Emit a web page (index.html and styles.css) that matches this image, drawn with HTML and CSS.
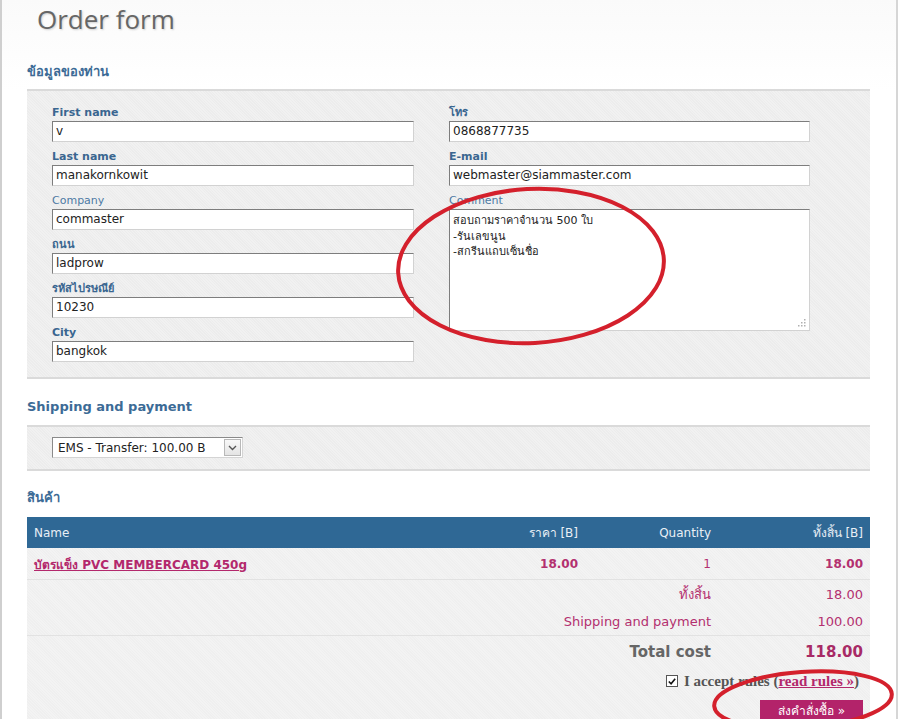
FILE: index.html
```html
<!DOCTYPE html>
<html lang="th">
<head>
<meta charset="utf-8">
<title>Order form</title>
<link rel="stylesheet" href="styles.css">
</head>
<body>
<div class="page">
  <h1 class="title">Order form</h1>

  <h2 class="sec sec-first">ข้อมูลของท่าน</h2>
  <div class="panel form-panel">
    <div class="col">
      <div class="field"><label class="lbl req">First name</label><div class="inp">v</div></div>
      <div class="field"><label class="lbl req">Last name</label><div class="inp">manakornkowit</div></div>
      <div class="field"><label class="lbl">Company</label><div class="inp">commaster</div></div>
      <div class="field"><label class="lbl req">ถนน</label><div class="inp">ladprow</div></div>
      <div class="field"><label class="lbl req">รหัสไปรษณีย์</label><div class="inp">10230</div></div>
      <div class="field"><label class="lbl req">City</label><div class="inp">bangkok</div></div>
    </div>
    <div class="col">
      <div class="field"><label class="lbl req">โทร</label><div class="inp">0868877735</div></div>
      <div class="field"><label class="lbl req">E-mail</label><div class="inp">webmaster@siammaster.com</div></div>
      <div class="field"><label class="lbl">Comment</label>
        <div class="inp area">สอบถามราคาจำนวน 500 ใบ<br>-รันเลขนูน<br>-สกรีนแถบเซ็นชื่อ
          <svg class="grip" width="9" height="9" viewBox="0 0 9 9"><g fill="#b0b0b0"><rect x="7" y="1" width="1.5" height="1.5"/><rect x="4" y="4" width="1.5" height="1.5"/><rect x="7" y="4" width="1.5" height="1.5"/><rect x="1" y="7" width="1.5" height="1.5"/><rect x="4" y="7" width="1.5" height="1.5"/><rect x="7" y="7" width="1.5" height="1.5"/></g></svg>
        </div>
      </div>
    </div>
  </div>

  <h2 class="sec sec-ship">Shipping and payment</h2>
  <div class="panel ship-panel">
    <div class="select"><span class="sel-text">EMS - Transfer: 100.00 B</span><span class="sel-btn"><svg width="9" height="6" viewBox="0 0 9 6"><path d="M1 1 L4.5 4.5 L8 1" fill="none" stroke="#555" stroke-width="1.4"/></svg></span></div>
  </div>

  <h2 class="sec sec-items">สินค้า</h2>
  <div class="items-wrap">
    <table class="items">
      <colgroup><col class="c-name"><col class="c-price"><col class="c-qty"><col class="c-sum"></colgroup>
      <thead>
        <tr><th class="tl">Name</th><th>ราคา [B]</th><th>Quantity</th><th>ทั้งสิ้น [B]</th></tr>
      </thead>
      <tbody>
        <tr class="r-item"><td class="tl"><a class="plink">บัตรแข็ง PVC MEMBERCARD 450g</a></td><td class="b">18.00</td><td>1</td><td class="b">18.00</td></tr>
        <tr class="r-sub"><td></td><td></td><td>ทั้งสิ้น</td><td>18.00</td></tr>
        <tr class="r-ship"><td></td><td colspan="2">Shipping and payment</td><td>100.00</td></tr>
        <tr class="r-total"><td></td><td colspan="2" class="tc-label">Total cost</td><td class="tc-val">118.00</td></tr>
      </tbody>
    </table>
    <div class="foot">
      <div class="accept"><span class="cb"><svg width="11" height="11" viewBox="0 0 11 11"><path d="M2 5.5 L4.5 8 L9 2.5" fill="none" stroke="#111" stroke-width="1.8"/></svg></span><span class="acc-text">I accept rules (<a class="rlink">read rules »</a>)</span></div>
      <div class="btn-row"><span class="btn">ส่งคำสั่งซื้อ »</span></div>
    </div>
  </div>

  <svg class="marks" width="900" height="719" viewBox="0 0 900 719">
    <ellipse cx="531" cy="266" rx="133" ry="77" transform="rotate(-3 531 266)" fill="none" stroke="#d4202c" stroke-width="4"/>
    <ellipse cx="803" cy="700" rx="89" ry="28" transform="rotate(-4 803 700)" fill="none" stroke="#d4202c" stroke-width="4"/>
  </svg>
</div>
</body>
</html>
```

FILE: styles.css
```css
* { box-sizing: border-box; }
html, body { margin: 0; padding: 0; background: #fff; }
body {
  font-family: "DejaVu Sans", Tahoma, "Noto Sans", sans-serif;
  font-size: 12px;
  color: #222;
  overflow: hidden;
}
.page {
  position: relative;
  width: 898px;
  height: 719px;
  border-left: 2px solid #cfcfcf;
  border-right: 2px solid #d6d6d6;
  padding: 0 26px 0 25px;
  background: linear-gradient(#fafafa, #fff 90px);
}
.title {
  margin: 0;
  padding: 3px 0 0 10px;
  height: 34px;
  line-height: 32px;
  font-family: "Open Sans", "DejaVu Sans", sans-serif;
  font-weight: 400;
  font-size: 26px;
  color: #666;
  text-shadow: 1px 1px 2px rgba(0,0,0,0.18);
}
.sec {
  margin: 0;
  font-size: 13px;
  font-weight: bold;
  line-height: 16px;
  color: #3c6b96;
}
.sec-first { padding: 30px 0 9px; }
.sec-ship { padding: 20px 0 10px; }
.sec-items { padding: 19px 0 11px; }

.panel {
  border-top: 2px solid #dadada;
  border-bottom: 2px solid #dadada;
  background-color: #f1f1f1;
  background-image: repeating-linear-gradient(45deg, rgba(0,0,0,0.018) 0 1px, transparent 1px 2px);
}
.form-panel {
  display: flex;
  gap: 35px;
  padding: 7px 0 15px 25px;
}
.col { width: 362px; }
.col + .col { width: 361px; }
.field { padding-top: 6px; }
.lbl {
  display: block;
  height: 16px;
  line-height: 17px;
  margin-bottom: 1px;
  font-size: 11px;
  color: #4d7aa4;
}
.lbl.req { font-weight: bold; color: #3a6690; }
.inp {
  position: relative;
  height: 21px;
  line-height: 19px;
  padding: 0 3px;
  background: #fff;
  border: 1px solid;
  border-color: #7d7d7d #d2d2d2 #d2d2d2 #7d7d7d;
  font-size: 12px;
  color: #222;
  white-space: nowrap;
}
.inp.area {
  height: 122px;
  line-height: 15.5px;
  padding-top: 3px;
  font-size: 11px;
}
.grip { position: absolute; right: 3px; bottom: 3px; }

.ship-panel { padding: 10px 0 11px 25px; }
.select {
  display: flex;
  align-items: center;
  width: 191px;
  height: 21px;
  background: #fff;
  border: 1px solid;
  border-color: #8a8a8a #d4d4d4 #d4d4d4 #8a8a8a;
  font-size: 12px;
  color: #222;
}
.sel-text { flex: 1; padding-left: 5px; white-space: nowrap; }
.sel-btn {
  width: 17px;
  height: 17px;
  margin-right: 1px;
  display: flex;
  align-items: center;
  justify-content: center;
  border: 1px solid #b8b8b8;
  background: linear-gradient(#f8f8f8, #e4e4e4);
}

.items-wrap {
  height: 202px;
  background-color: #f3f3f3;
  background-image: repeating-linear-gradient(45deg, rgba(0,0,0,0.016) 0 1px, transparent 1px 2px);
}
.items {
  width: 843px;
  table-layout: fixed;
  border-collapse: collapse;
  font-size: 13px;
}
.c-name { width: 430px; }
.c-price { width: 128px; }
.c-qty { width: 133px; }
.c-sum { width: 152px; }
.items th {
  height: 31px;
  padding: 0 7px;
  background: #2f6895;
  color: #e9eff5;
  font-weight: normal;
  font-size: 12px;
  text-align: right;
  white-space: nowrap;
}
.items th.tl, .items td.tl { text-align: left; }
.items td {
  padding: 0 7px;
  text-align: right;
  color: #b3306f;
  white-space: nowrap;
}
.r-item td { height: 31px; padding-top: 2px; border-bottom: 1px solid #e2e2e2; font-size: 12px; }
.r-sub td { height: 28px; padding-top: 2px; }
.r-ship td { height: 28px; padding-top: 2px; border-bottom: 1px solid #e2e2e2; }
.r-total td { height: 32px; padding-top: 2px; }
.items td.b { font-weight: bold; }
.plink { color: #b3286c; font-weight: bold; text-decoration: underline; }
.tc-label { font-weight: bold; font-size: 15px; color: #666 !important; }
.tc-val { font-weight: bold; font-size: 15px; color: #a82a66 !important; }

.foot { padding: 6px 7px 0 0; }
.accept {
  display: flex;
  justify-content: flex-end;
  align-items: center;
  gap: 6px;
  height: 16px;
  padding-right: 4px;
}
.cb {
  width: 12px;
  height: 12px;
  border: 1px solid #555;
  background: #fff;
  display: flex;
  align-items: center;
  justify-content: center;
}
.acc-text {
  font-family: "Liberation Serif", "DejaVu Serif", serif;
  font-weight: bold;
  font-size: 15px;
  color: #555;
}
.rlink { color: #b3286c; text-decoration: underline; }
.btn-row { display: flex; justify-content: flex-end; padding-top: 11px; }
.btn {
  display: inline-block;
  width: 103px;
  height: 24px;
  line-height: 23px;
  text-align: center;
  background: #b3236a;
  color: #fff;
  font-size: 12px;
}
.marks { position: absolute; left: -2px; top: 0; pointer-events: none; }
```
